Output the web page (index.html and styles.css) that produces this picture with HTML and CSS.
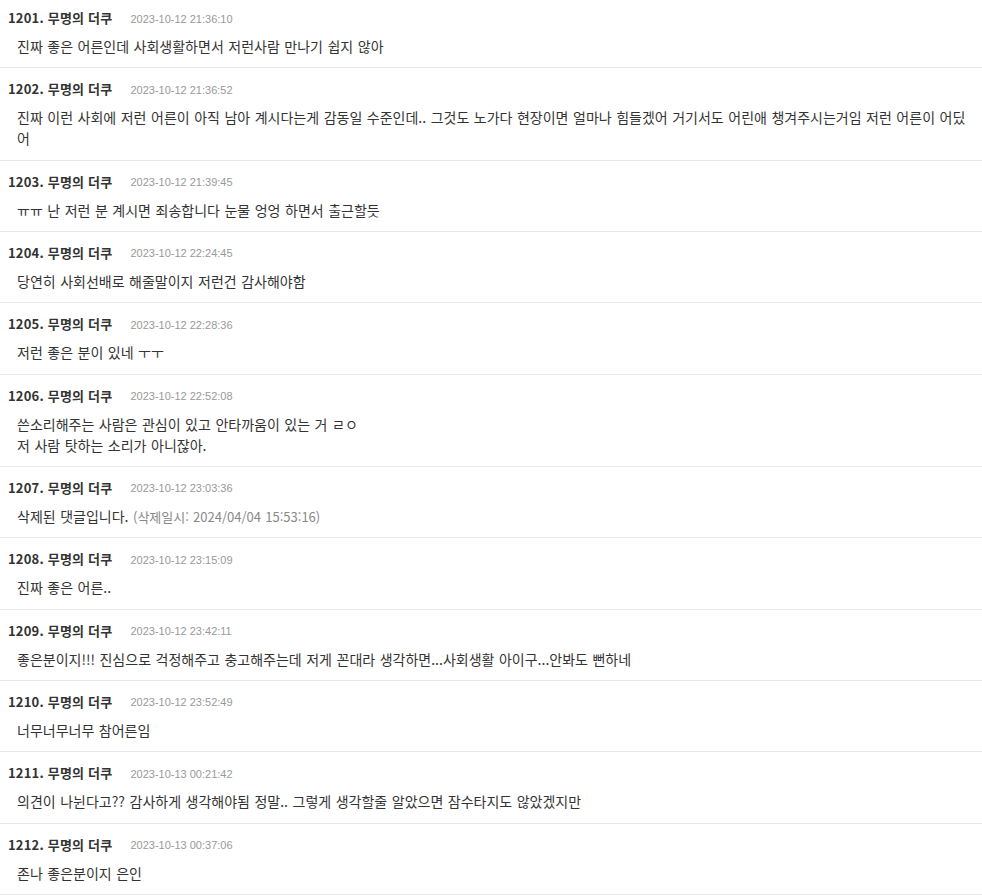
FILE: index.html
```html
<!DOCTYPE html>
<html lang="ko">
<head>
    <meta charset="UTF-8">
    <title>댓글</title>
    <link rel="stylesheet" href="styles.css">
</head>
<body>
    <ul class="comment-list">
        <li class="comment">
            <div class="comment-head"><span class="nick">1201. 무명의 더쿠</span><span class="date">2023-10-12 21:36:10</span></div>
            <div class="comment-body">진짜 좋은 어른인데 사회생활하면서 저런사람 만나기 쉽지 않아</div>
        </li>
        <li class="comment">
            <div class="comment-head"><span class="nick">1202. 무명의 더쿠</span><span class="date">2023-10-12 21:36:52</span></div>
            <div class="comment-body">진짜 이런 사회에 저런 어른이 아직 남아 계시다는게 감동일 수준인데.. 그것도 노가다 현장이면 얼마나 힘들겠어 거기서도 어린애 챙겨주시는거임 저런 어른이 어딨어</div>
        </li>
        <li class="comment">
            <div class="comment-head"><span class="nick">1203. 무명의 더쿠</span><span class="date">2023-10-12 21:39:45</span></div>
            <div class="comment-body">ㅠㅠ 난 저런 분 계시면 죄송합니다 눈물 엉엉 하면서 출근할듯</div>
        </li>
        <li class="comment">
            <div class="comment-head"><span class="nick">1204. 무명의 더쿠</span><span class="date">2023-10-12 22:24:45</span></div>
            <div class="comment-body">당연히 사회선배로 해줄말이지 저런건 감사해야함</div>
        </li>
        <li class="comment">
            <div class="comment-head"><span class="nick">1205. 무명의 더쿠</span><span class="date">2023-10-12 22:28:36</span></div>
            <div class="comment-body">저런 좋은 분이 있네 ㅜㅜ</div>
        </li>
        <li class="comment">
            <div class="comment-head"><span class="nick">1206. 무명의 더쿠</span><span class="date">2023-10-12 22:52:08</span></div>
            <div class="comment-body">쓴소리해주는 사람은 관심이 있고 안타까움이 있는 거 ㄹㅇ<br>저 사람 탓하는 소리가 아니잖아.</div>
        </li>
        <li class="comment">
            <div class="comment-head"><span class="nick">1207. 무명의 더쿠</span><span class="date">2023-10-12 23:03:36</span></div>
            <div class="comment-body">삭제된 댓글입니다. <span class="deleted">(삭제일시: 2024/04/04 15:53:16)</span></div>
        </li>
        <li class="comment">
            <div class="comment-head"><span class="nick">1208. 무명의 더쿠</span><span class="date">2023-10-12 23:15:09</span></div>
            <div class="comment-body">진짜 좋은 어른..</div>
        </li>
        <li class="comment">
            <div class="comment-head"><span class="nick">1209. 무명의 더쿠</span><span class="date">2023-10-12 23:42:11</span></div>
            <div class="comment-body">좋은분이지!!! 진심으로 걱정해주고 충고해주는데 저게 꼰대라 생각하면...사회생활 아이구...안봐도 뻔하네</div>
        </li>
        <li class="comment">
            <div class="comment-head"><span class="nick">1210. 무명의 더쿠</span><span class="date">2023-10-12 23:52:49</span></div>
            <div class="comment-body">너무너무너무 참어른임</div>
        </li>
        <li class="comment">
            <div class="comment-head"><span class="nick">1211. 무명의 더쿠</span><span class="date">2023-10-13 00:21:42</span></div>
            <div class="comment-body">의견이 나뉜다고?? 감사하게 생각해야됨 정말.. 그렇게 생각할줄 알았으면 잠수타지도 않았겠지만</div>
        </li>
        <li class="comment">
            <div class="comment-head"><span class="nick">1212. 무명의 더쿠</span><span class="date">2023-10-13 00:37:06</span></div>
            <div class="comment-body">존나 좋은분이지 은인</div>
        </li>
    </ul>
</body>
</html>
```

FILE: styles.css
```css
body {
    margin: 0;
    background: #fff;
    color: #333;
    font-family: "Noto Sans CJK KR", "Noto Sans", sans-serif;
    font-size: 13px;
}
.comment-list {
    list-style: none;
    margin: -3px 0 0 0;
    padding: 0;
}
.comment {
    padding: 11px 0 10.33px 0;
    border-bottom: 1px solid #e8e8e8;
}
.comment-head {
    display: flex;
    align-items: center;
    height: 20px;
    padding-left: 8px;
    overflow: hidden;
}
.nick {
    font-weight: bold;
    font-size: 13px;
    line-height: 20px;
    letter-spacing: 0.2px;
    color: #333;
}
.date {
    margin-left: 18px;
    padding-top: 1px;
    font-family: "Liberation Sans", Arial, sans-serif;
    font-size: 11px;
    line-height: 20px;
    color: #999;
}
.comment-body {
    margin-top: 8px;
    padding: 0 4px 0 17px;
    font-size: 14px;
    word-spacing: 0.6px;
    line-height: 21px;
    color: #333;
}
.deleted {
    font-size: 13px;
    line-height: 1;
    color: #888;
}
```
